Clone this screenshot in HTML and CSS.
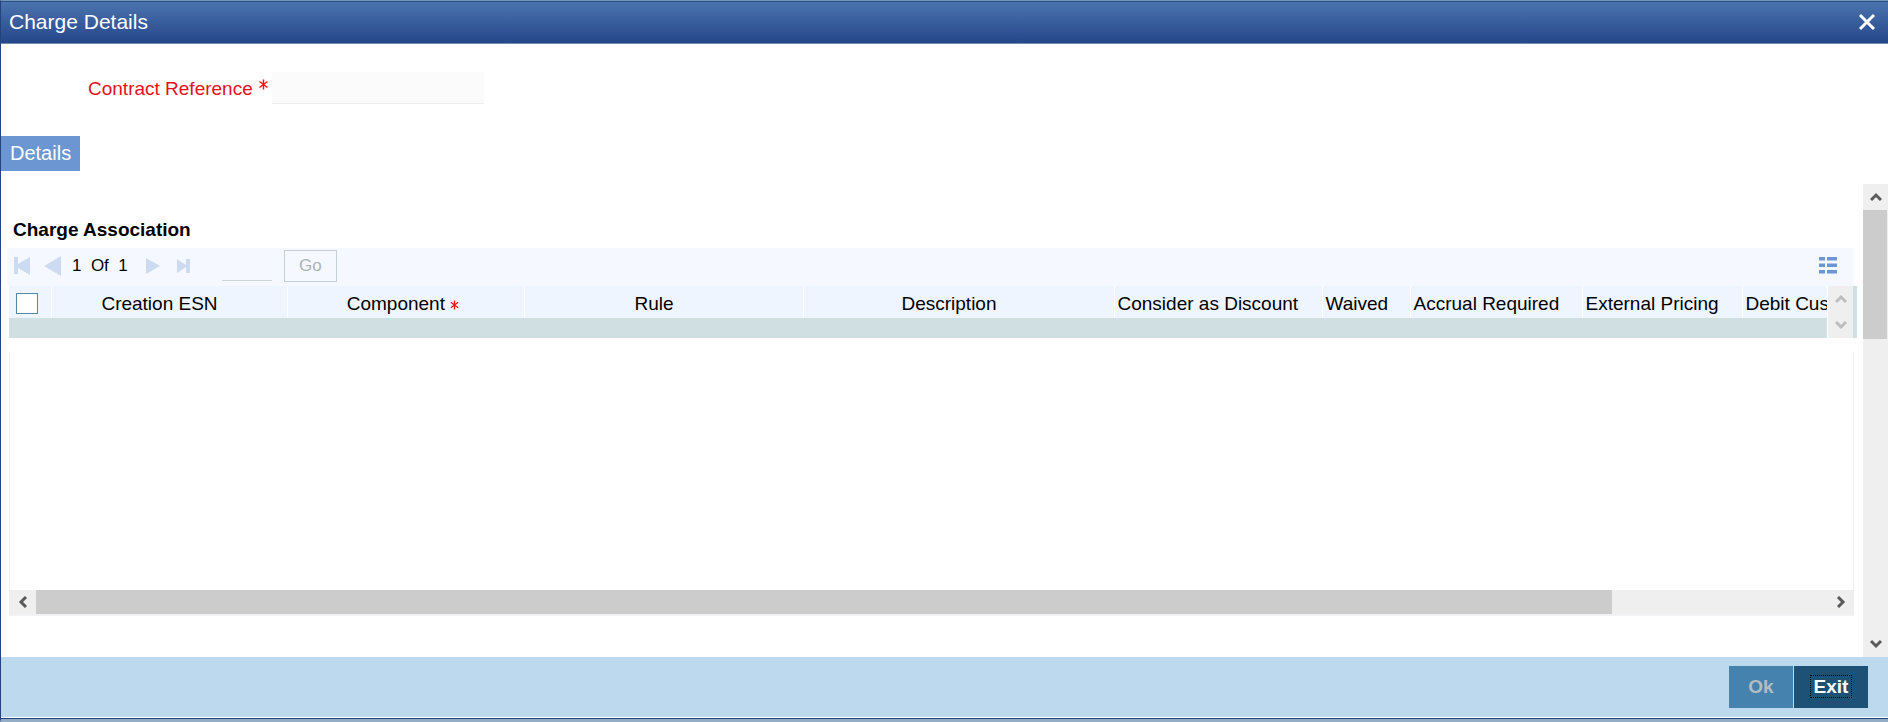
FILE: index.html
```html
<!DOCTYPE html>
<html lang="en">
  <head>
    <meta charset="UTF-8" />
    <meta name="viewport" content="width=device-width, initial-scale=1.0" />
    <title>Charge Details</title>
    <link rel="stylesheet" href="styles.css">
  </head>
  <body>
    <div class="window">
      <header class="titlebar">
        <h1>Charge Details</h1>
        <button class="close" aria-label="Close">
          <svg width="18" height="18" viewBox="0 0 18 18">
            <path d="M2 2L16 16M16 2L2 16" />
          </svg>
        </button>
      </header>

      <div class="field">
        <label for="contract-ref">Contract Reference</label>
        <svg class="star" width="9" height="11" viewBox="0 0 9 11">
          <path d="M4.5 0.5V10.5M0.5 2.5L8.5 8.5M8.5 2.5L0.5 8.5" />
        </svg>
        <input type="text" id="contract-ref" readonly />
      </div>

      <nav class="tabs">
        <a href="#details" class="tab">Details</a>
      </nav>

      <main class="body" id="details">
        <section class="content">
          <h2>Charge Association</h2>

          <div class="toolbar">
            <button class="nav first" aria-label="First page" disabled>
              <svg width="16" height="18" viewBox="0 0 16 18">
                <path d="M0 0H4V7L16 0V18L4 11V17H0Z" />
              </svg>
            </button>
            <button class="nav prev" aria-label="Previous page" disabled>
              <svg width="17" height="20" viewBox="0 0 17 20">
                <path d="M17 0V20L0 10Z" />
              </svg>
            </button>
            <span class="pages">1&nbsp; Of&nbsp; 1</span>
            <button class="nav next" aria-label="Next page" disabled>
              <svg width="14" height="16" viewBox="0 0 14 16">
                <path d="M0 0L14 8L0 16Z" />
              </svg>
            </button>
            <button class="nav last" aria-label="Last page" disabled>
              <svg width="13" height="14" viewBox="0 0 13 14">
                <path d="M0 0L9 6V0H13V14H9V8L0 14Z" />
              </svg>
            </button>
            <input type="text" class="page-input" aria-label="Go to page" />
            <button class="go" disabled>Go</button>
            <button class="nav list" aria-label="Columns">
              <svg width="18" height="17" viewBox="0 0 18 17">
                <path d="M0 0H6V3.5H0ZM8 0H18V3.5H8ZM0 6.5H6V10H0ZM8 6.5H18V10H8ZM0 13H6V16.5H0ZM8 13H18V16.5H8Z" />
              </svg>
            </button>
          </div>

          <div class="grid-head">
            <div class="table-wrap">
              <table>
                <colgroup>
                  <col class="c-check" />
                  <col class="c-esn" />
                  <col class="c-component" />
                  <col class="c-rule" />
                  <col class="c-desc" />
                  <col class="c-discount" />
                  <col class="c-waived" />
                  <col class="c-accrual" />
                  <col class="c-pricing" />
                  <col class="c-debit" />
                </colgroup>
                <thead>
                  <tr>
                    <th class="check"><input type="checkbox" aria-label="Select all" /></th>
                    <th>Creation ESN</th>
                    <th class="required">
                      Component
                      <svg class="star" width="9" height="10" viewBox="0 0 9 11">
                        <path d="M4.5 0.5V10.5M0.5 2.5L8.5 8.5M8.5 2.5L0.5 8.5" />
                      </svg>
                    </th>
                    <th>Rule</th>
                    <th>Description</th>
                    <th class="left">Consider as Discount</th>
                    <th class="left">Waived</th>
                    <th class="left">Accrual Required</th>
                    <th class="left">External Pricing</th>
                    <th class="left">Debit Customer</th>
                  </tr>
                </thead>
              </table>
            </div>
            <div class="mini-scroll">
              <button aria-label="Row up" disabled>
                <svg width="12" height="10" viewBox="0 0 12 10"><path d="M1 8L6 3L11 8" /></svg>
              </button>
              <button aria-label="Row down" disabled>
                <svg width="12" height="10" viewBox="0 0 12 10"><path d="M1 2L6 7L11 2" /></svg>
              </button>
            </div>
          </div>

          <div class="grid-body"></div>
          <div class="hscroll">
            <button aria-label="Scroll left">
              <svg width="10" height="12" viewBox="0 0 10 12"><path d="M8 1L3 6L8 11" /></svg>
            </button>
            <div class="track"><div class="thumb"></div></div>
            <button aria-label="Scroll right">
              <svg width="10" height="12" viewBox="0 0 10 12"><path d="M2 1L7 6L2 11" /></svg>
            </button>
          </div>
        </section>

        <div class="vscroll">
          <button aria-label="Scroll up">
            <svg width="12" height="10" viewBox="0 0 12 10"><path d="M1 8L6 3L11 8" /></svg>
          </button>
          <div class="track"><div class="thumb"></div></div>
          <button aria-label="Scroll down">
            <svg width="12" height="10" viewBox="0 0 12 10"><path d="M1 2L6 7L11 2" /></svg>
          </button>
        </div>
      </main>

      <footer class="footer">
        <button class="button ok" disabled>Ok</button>
        <button class="button exit"><span>Exit</span></button>
      </footer>
    </div>
  </body>
</html>
```

FILE: styles.css
```css
* {
  box-sizing: border-box;
}

:root {
  --navy: #24427c;
  --tab: #6b96d2;
  --toolbar: #f5f9ff;
  --head: #eef5ff;
  --band: #d0dfe2;
  --scroll: #efefef;
  --thumb: #cccccc;
  --arrow: #5a5a5a;
}

body {
  margin: 0;
  min-height: 100vh;
  display: flex;
  flex-direction: column;
  font-family: "Liberation Sans", Arial, sans-serif;
  font-size: 19px;
  color: #000;
  background: #fff;
}

button,
input {
  margin: 0;
  padding: 0;
  border: 0;
  border-radius: 0;
  font: inherit;
  background: none;
}

svg {
  display: block;
}

.window {
  flex: 1;
  display: flex;
  flex-direction: column;
  border-left: 1px solid var(--navy);
  border-top: 1px solid #7095b5;
  border-bottom: 3px solid #93adc6;
}

.titlebar {
  height: 43px;
  display: flex;
  align-items: center;
  justify-content: space-between;
  padding: 0 12px 2px 8px;
  border-top: 1px solid #2c4f80;
  border-bottom: 1px solid #7389ae;
  background: linear-gradient(#4a74ae, #25468a);
  color: #fff;
}

.titlebar h1 {
  margin: 0;
  font-size: 21px;
  font-weight: normal;
}

.close path {
  stroke: #fff;
  stroke-width: 3;
}

.field {
  display: flex;
  align-items: center;
  padding: 28px 0 32px 87px;
  color: #e3101d;
}

.field label {
  padding-top: 2px;
}

.field .star {
  margin: 0 4px 8px 6px;
}

.field input {
  width: 212px;
  height: 32px;
  background: #fbfbfb;
  border-bottom: 1px solid #ececec;
}

.star path {
  fill: none;
  stroke: #f01010;
  stroke-width: 1.4;
}

.tabs {
  display: flex;
}

.tab {
  padding: 0 9px;
  line-height: 35px;
  font-size: 20px;
  color: #fff;
  background: var(--tab);
  text-decoration: none;
}

.body {
  flex: 1;
  display: flex;
  margin-top: 13px;
}

.content {
  flex: 1;
  min-width: 0;
  display: flex;
  flex-direction: column;
  padding: 35px 6px 41px 6px;
}

h2 {
  margin: 0 0 7px 6px;
  font-size: 19px;
  line-height: 22px;
}

.toolbar {
  height: 38px;
  display: flex;
  align-items: center;
  margin-right: 3px;
  padding: 0 17px 3px 7px;
  background: var(--toolbar);
}

.nav path {
  fill: #ccdaf2;
}

.prev {
  margin-left: 14px;
}

.pages {
  margin-left: 11px;
  font-size: 17px;
}

.next {
  margin-left: 18px;
}

.last {
  margin-left: 17px;
}

.page-input {
  width: 50px;
  height: 30px;
  margin-left: 32px;
  border-bottom: 1px solid #cfd6d8;
}

.go {
  width: 53px;
  height: 32px;
  margin-left: 12px;
  border: 1px solid #c6ced8;
  font-size: 17px;
  color: #adb1b6;
}

.list {
  margin-left: auto;
}

.list path {
  fill: var(--tab);
}

.grid-head {
  display: flex;
  margin-left: 2px;
  border-right: 4px solid var(--band);
  background: var(--band);
}

.table-wrap {
  flex: 1;
  min-width: 0;
  height: 52px;
  overflow: hidden;
}

table {
  width: 1980px;
  table-layout: fixed;
  border-collapse: collapse;
}

.c-check { width: 42px; }
.c-esn { width: 236px; }
.c-component { width: 237px; }
.c-rule { width: 279px; }
.c-desc { width: 311px; }
.c-discount { width: 208px; }
.c-waived { width: 88px; }
.c-accrual { width: 172px; }
.c-pricing { width: 160px; }

th {
  height: 32px;
  padding: 4px 22px 0 3px;
  border-right: 1px solid #fff;
  background: var(--head);
  font-weight: normal;
  line-height: 22px;
  white-space: nowrap;
}

th.left {
  padding-right: 0;
  text-align: left;
}

th.required {
  padding-right: 8px;
}

th .star {
  display: inline-block;
}

th.check {
  padding: 2px 0 0 7px;
}

.check input {
  appearance: none;
  display: block;
  width: 22px;
  height: 21px;
  border: 1px solid #5588a3;
  background: #fff;
}

.mini-scroll {
  width: 26px;
  display: flex;
  flex-direction: column;
  border-left: 1px solid #fff;
  background: var(--scroll);
}

.mini-scroll button,
.vscroll button,
.hscroll button {
  display: flex;
  align-items: center;
  justify-content: center;
}

.mini-scroll button {
  flex: 1;
}

.mini-scroll path,
.vscroll path,
.hscroll path {
  fill: none;
  stroke: var(--arrow);
  stroke-width: 3;
}

.mini-scroll path {
  stroke: #bdbdbd;
}

.grid-body {
  flex: 1;
  min-height: 120px;
  margin: 14px 3px 0 2px;
  border: solid #efefef;
  border-width: 0 1px;
}

.hscroll {
  display: flex;
  height: 26px;
  margin: 0 3px 0 2px;
  border-bottom: 2px solid #f2f2f4;
  background: var(--scroll);
}

.hscroll button {
  width: 27px;
}

.track {
  flex: 1;
}

.hscroll .thumb {
  width: 88%;
  height: 24px;
  background: var(--thumb);
}

.vscroll {
  width: 25px;
  display: flex;
  flex-direction: column;
  background: var(--scroll);
}

.vscroll button {
  height: 26px;
}

.vscroll .thumb {
  width: 24px;
  height: 129px;
  background: var(--thumb);
}

.footer {
  display: flex;
  justify-content: flex-end;
  gap: 1px;
  padding: 9px 20px 10px;
  border-bottom: 1px solid var(--navy);
  box-shadow: inset 0 -1px #fff;
  background: #bcd9ed;
}

.button {
  height: 42px;
  font-weight: bold;
}

.ok {
  width: 64px;
  color: #b5bdc2;
  background: #4682ae;
}

.exit {
  width: 74px;
  color: #fff;
  background: #1d5277;
}

.exit span {
  padding: 0 3px;
  outline: 1px dotted #000;
}
```
